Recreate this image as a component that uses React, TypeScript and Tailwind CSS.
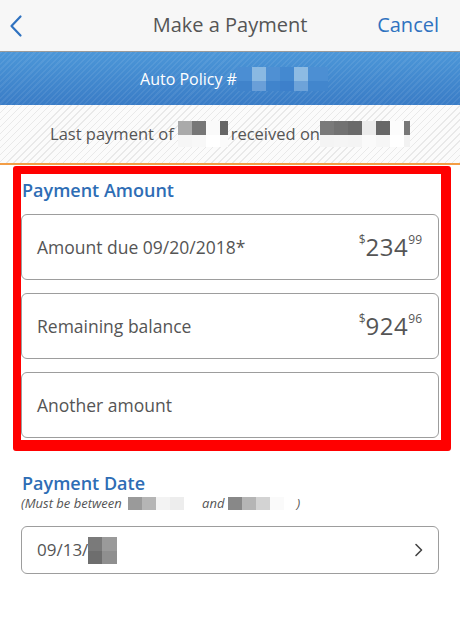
import React from "react";

type Cell = { w: string; c: string };

function Pix({ rows }: { rows: { h: string; cells: Cell[] }[] }) {
  return (
    <span className="inline-flex flex-col align-middle">
      {rows.map((r, i) => (
        <span key={i} className={`flex ${r.h}`}>
          {r.cells.map((cell, j) => (
            <span key={j} className={`${cell.w} ${cell.c} h-full`} />
          ))}
        </span>
      ))}
    </span>
  );
}

function Price({ whole, cents }: { whole: string; cents: string }) {
  return (
    <div className="flex items-start text-[#555]">
      <span className="text-[12px] leading-none mt-[-1px]">$</span>
      <span className="text-[24px] leading-none tracking-[0.5px]">{whole}</span>
      <span className="text-[12px] leading-none mt-[-1px]">{cents}</span>
    </div>
  );
}

function AmountCard({ label, price }: { label: string; price?: React.ReactNode }) {
  return (
    <div className="h-[66px] rounded-[6px] border border-[#9d9d9d] bg-white flex items-center justify-between pl-[15px] pr-[16px]">
      <span className="text-[17.5px] text-[#555] leading-6">{label}</span>
      {price}
    </div>
  );
}

export default function App() {
  const font = { fontFamily: '"Open Sans", "Noto Sans", sans-serif' };
  return (
    <div className="w-[460px] h-[635px] bg-white overflow-hidden" style={font}>
      {/* Header */}
      <div className="h-[52px] bg-[#f7f7f7] border-b border-[#9a9a9a] grid grid-cols-[1fr_auto_1fr] items-center">
        <div className="justify-self-start pl-[9px] flex items-center">
          <svg width="14" height="24" viewBox="0 0 14 24" fill="none">
            <path d="M11.5 2.5 L2.5 12 L11.5 21.5" stroke="#2f72c0" strokeWidth="2.2" strokeLinecap="round" strokeLinejoin="round" />
          </svg>
        </div>
        <div className="text-[20px] text-[#555] leading-6 pb-[1px]">Make a Payment</div>
        <div className="justify-self-end pr-[21px] text-[20px] text-[#2f72c0] leading-6 pb-[1px]">Cancel</div>
      </div>

      {/* Blue banner */}
      <div className="h-[53px] flex items-center justify-center text-white text-[16px] pl-[8px] bg-[repeating-linear-gradient(135deg,rgba(255,255,255,0.07)_0px,rgba(255,255,255,0.07)_1.5px,transparent_1.5px,transparent_4px),linear-gradient(to_bottom,#4c97d8,#3a7cc6)]">
        <span className="leading-6">Auto Policy #</span>
        <Pix
          rows={[
            {
              h: "h-[14px]",
              cells: [
                { w: "w-[15px]", c: "bg-[#4b8ed3]" },
                { w: "w-[14px]", c: "bg-[#8ab9e2]" },
                { w: "w-[14px]", c: "bg-[#4f90d3]" },
                { w: "w-[14px]", c: "bg-[#4489d0]" },
                { w: "w-[14px]", c: "bg-[#8dbbe3]" },
                { w: "w-[20px]", c: "bg-[#4c8fd3]" },
              ],
            },
            {
              h: "h-[10px]",
              cells: [
                { w: "w-[15px]", c: "bg-[#4083cb]" },
                { w: "w-[14px]", c: "bg-[#6a9fd8]" },
                { w: "w-[14px]", c: "bg-[#4084cc]" },
                { w: "w-[14px]", c: "bg-[#3d80cb]" },
                { w: "w-[14px]", c: "bg-[#6ea3d9]" },
                { w: "w-[20px]", c: "bg-[#4286cd]" },
              ],
            },
          ]}
        />
      </div>

      {/* Last payment striped */}
      <div className="h-[58px] flex items-center justify-center text-[16.5px] text-[#555] bg-[repeating-linear-gradient(135deg,#e9e9e9_0px,#e9e9e9_1px,#fbfbfb_1px,#fbfbfb_5px)]">
        <span className="leading-6">Last payment of </span>
        <span className="ml-[4px] mr-[3px]">
          <Pix
            rows={[
              {
                h: "h-[14px]",
                cells: [
                  { w: "w-[14px]", c: "bg-[#aaaaaa]" },
                  { w: "w-[14px]", c: "bg-[#777777]" },
                  { w: "w-[14px]", c: "bg-[#fafafa]" },
                  { w: "w-[8px]", c: "bg-[#666666]" },
                ],
              },
              {
                h: "h-[12px]",
                cells: [
                  { w: "w-[14px]", c: "bg-[#f6f6f6]" },
                  { w: "w-[14px]", c: "bg-[#f8f8f8]" },
                  { w: "w-[14px]", c: "bg-[#ffffff]" },
                  { w: "w-[8px]", c: "bg-[#fafafa]" },
                ],
              },
            ]}
          />
        </span>
        <span className="leading-6">received on</span>
        <Pix
          rows={[
            {
              h: "h-[14px]",
              cells: [
                { w: "w-[14px]", c: "bg-[#7a7a7a]" },
                { w: "w-[14px]", c: "bg-[#727272]" },
                { w: "w-[14px]", c: "bg-[#6a6a6a]" },
                { w: "w-[14px]", c: "bg-[#ebebeb]" },
                { w: "w-[14px]", c: "bg-[#676767]" },
                { w: "w-[14px]", c: "bg-[#fcfcfc]" },
                { w: "w-[6px]", c: "bg-[#777777]" },
              ],
            },
            {
              h: "h-[12px]",
              cells: [
                { w: "w-[14px]", c: "bg-[#f4f4f4]" },
                { w: "w-[14px]", c: "bg-[#f5f5f5]" },
                { w: "w-[14px]", c: "bg-[#f4f4f4]" },
                { w: "w-[14px]", c: "bg-[#fafafa]" },
                { w: "w-[14px]", c: "bg-[#f6f6f6]" },
                { w: "w-[14px]", c: "bg-[#ffffff]" },
                { w: "w-[6px]", c: "bg-[#f2f2f2]" },
              ],
            },
          ]}
        />
      </div>

      {/* Orange line */}
      <div className="h-[2px] bg-[#f39d45]" />
      <div className="h-[1px]" />

      {/* Payment Amount (outlined) */}
      <div className="ml-[13px] w-[438px] border-l-[8px] border-t-[8px] border-r-[10px] border-b-[11px] border-[#ff0000] rounded-[3px] pr-[2px] pb-[2px]">
        <div className="pt-[4px] pl-[1px] text-[18px] font-semibold text-[#2e6db5] leading-6">Payment Amount</div>
        <div className="mt-[12px] flex flex-col gap-[13px]">
          <AmountCard label="Amount due 09/20/2018*" price={<Price whole="234" cents="99" />} />
          <AmountCard label="Remaining balance" price={<Price whole="924" cents="96" />} />
          <AmountCard label="Another amount" />
        </div>
      </div>

      {/* Payment Date */}
      <div className="px-[21px]">
        <div className="mt-[20px] pl-[1px] text-[18px] font-semibold text-[#2e6db5] leading-6">Payment Date</div>
        <div className="flex items-center text-[13px] italic text-[#555] leading-4">
          <span className="mr-[3px]">(Must be between&nbsp;</span>
          <Pix
            rows={[
              {
                h: "h-[13px]",
                cells: [
                  { w: "w-[14px]", c: "bg-[#9a9a9a]" },
                  { w: "w-[14px]", c: "bg-[#b5b5b5]" },
                  { w: "w-[14px]", c: "bg-[#f3f3f3]" },
                  { w: "w-[14px]", c: "bg-[#ededed]" },
                ],
              },
            ]}
          />
          <span className="ml-[18px] mr-[4px]">and</span>
          <Pix
            rows={[
              {
                h: "h-[13px]",
                cells: [
                  { w: "w-[14px]", c: "bg-[#888888]" },
                  { w: "w-[14px]", c: "bg-[#b5b5b5]" },
                  { w: "w-[14px]", c: "bg-[#d3d3d3]" },
                  { w: "w-[14px]", c: "bg-[#fafafa]" },
                ],
              },
            ]}
          />
          <span className="ml-[12px]">)</span>
        </div>
        <div className="mt-[15px] h-[48px] w-[418px] rounded-[6px] border border-[#9d9d9d] flex items-center justify-between pl-[15px] pr-[14px]">
          <div className="flex items-center text-[17px] text-[#555] leading-6">
            <span>09/13/</span>
            <Pix
              rows={[
                {
                  h: "h-[14px]",
                  cells: [
                    { w: "w-[14px]", c: "bg-[#7a7a7a]" },
                    { w: "w-[15px]", c: "bg-[#9a9a9a]" },
                  ],
                },
                {
                  h: "h-[13px]",
                  cells: [
                    { w: "w-[14px]", c: "bg-[#6e6e6e]" },
                    { w: "w-[15px]", c: "bg-[#8f8f8f]" },
                  ],
                },
              ]}
            />
          </div>
          <svg width="10" height="14" viewBox="0 0 10 14" fill="none">
            <path d="M2 1.5 L7.5 7 L2 12.5" stroke="#444" strokeWidth="1.6" strokeLinecap="round" strokeLinejoin="round" />
          </svg>
        </div>
      </div>
    </div>
  );
}
